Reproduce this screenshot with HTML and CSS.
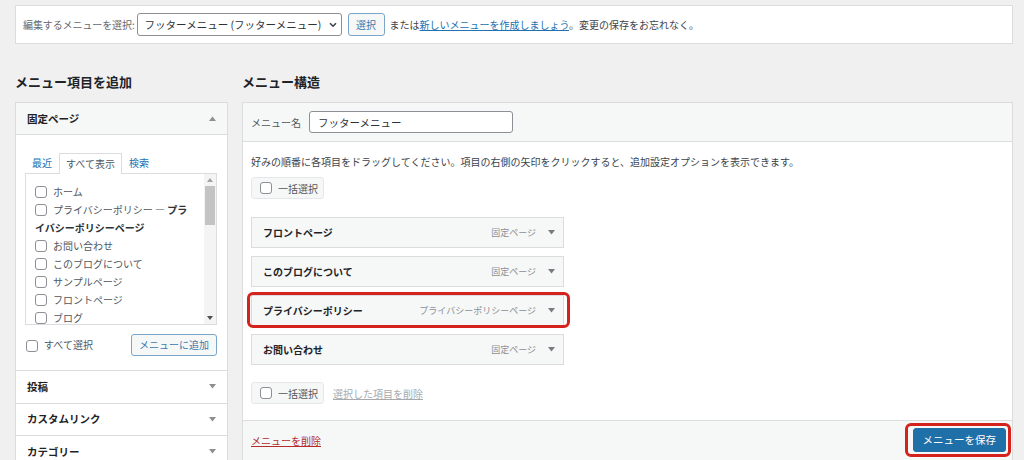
FILE: index.html
```html
<!DOCTYPE html>
<html lang="ja">
<head>
<meta charset="utf-8">
<title>メニュー</title>
<link rel="stylesheet" href="styles.css">
</head>
<body>
<div class="page">
  <div class="manage-menus">
    <span class="mm-label">編集するメニューを選択:</span>
    <span class="select"><span class="select-text">フッターメニュー (フッターメニュー)</span><svg class="chev" width="8" height="6" viewBox="0 0 8 6"><path d="M1 1.2L4 4.2L7 1.2" fill="none" stroke="#3c434a" stroke-width="1.6"/></svg></span>
    <span class="btn btn-secondary btn-select">選択</span>
    <span class="mm-text">または<a href="#" class="link">新しいメニューを作成しましょう</a>。変更の保存をお忘れなく。</span>
  </div>

  <div class="columns">
    <div class="col-left">
      <h2 class="col-title">メニュー項目を追加</h2>
      <div class="accordion">
        <div class="acc-section open">
          <div class="acc-head">固定ページ<svg width="7" height="5" viewBox="0 0 7 5"><path d="M0 5L3.5 0.5L7 5Z" fill="#8c8f94"/></svg></div>
          <div class="acc-body">
            <div class="tabs">
              <span class="tab">最近</span>
              <span class="tab active">すべて表示</span>
              <span class="tab">検索</span>
            </div>
            <div class="listbox">
              <ul class="list">
                <li><input type="checkbox" class="cb">ホーム</li>
                <li><input type="checkbox" class="cb">プライバシーポリシー — <strong>プラ<br>イバシーポリシーページ</strong></li>
                <li><input type="checkbox" class="cb">お問い合わせ</li>
                <li><input type="checkbox" class="cb">このブログについて</li>
                <li><input type="checkbox" class="cb">サンプルページ</li>
                <li><input type="checkbox" class="cb">フロントページ</li>
                <li><input type="checkbox" class="cb">ブログ</li>
              </ul>
              <div class="scrollbar">
                <span class="sb-btn"><svg width="6" height="4" viewBox="0 0 6 4"><path d="M0 4L3 0L6 4Z" fill="#a3a3a3"/></svg></span>
                <div class="sb-track"><div class="sb-thumb"></div></div>
                <span class="sb-btn"><svg width="6" height="4" viewBox="0 0 6 4"><path d="M0 0H6L3 4Z" fill="#505050"/></svg></span>
              </div>
            </div>
            <div class="acc-actions">
              <label class="check-label"><input type="checkbox" class="cb">すべて選択</label>
              <span class="btn btn-secondary btn-add">メニューに追加</span>
            </div>
          </div>
        </div>
        <div class="acc-section">
          <div class="acc-head">投稿<svg width="7" height="5" viewBox="0 0 7 5"><path d="M0 0H7L3.5 4.5Z" fill="#8c8f94"/></svg></div>
        </div>
        <div class="acc-section">
          <div class="acc-head">カスタムリンク<svg width="7" height="5" viewBox="0 0 7 5"><path d="M0 0H7L3.5 4.5Z" fill="#8c8f94"/></svg></div>
        </div>
        <div class="acc-section">
          <div class="acc-head">カテゴリー<svg width="7" height="5" viewBox="0 0 7 5"><path d="M0 0H7L3.5 4.5Z" fill="#8c8f94"/></svg></div>
        </div>
      </div>
    </div>

    <div class="col-right">
      <h2 class="col-title">メニュー構造</h2>
      <div class="menu-edit">
        <div class="me-header">
          <label class="me-label">メニュー名</label>
          <input class="name-input" type="text" value="フッターメニュー">
        </div>
        <div class="me-body">
          <p class="desc">好みの順番に各項目をドラッグしてください。項目の右側の矢印をクリックすると、追加設定オプションを表示できます。</p>
          <label class="bulk"><input type="checkbox" class="cb">一括選択</label>
          <ul class="menu-items">
            <li class="menu-item"><span class="mi-title">フロントページ</span><span class="mi-type">固定ページ</span><svg class="mi-arrow" width="7" height="5" viewBox="0 0 7 5"><path d="M0 0H7L3.5 4.5Z" fill="#787c82"/></svg></li>
            <li class="menu-item"><span class="mi-title">このブログについて</span><span class="mi-type">固定ページ</span><svg class="mi-arrow" width="7" height="5" viewBox="0 0 7 5"><path d="M0 0H7L3.5 4.5Z" fill="#787c82"/></svg></li>
            <li class="menu-item"><span class="mi-title">プライバシーポリシー</span><span class="mi-type">プライバシーポリシーページ</span><svg class="mi-arrow" width="7" height="5" viewBox="0 0 7 5"><path d="M0 0H7L3.5 4.5Z" fill="#787c82"/></svg><span class="hl hl-item"></span></li>
            <li class="menu-item"><span class="mi-title">お問い合わせ</span><span class="mi-type">固定ページ</span><svg class="mi-arrow" width="7" height="5" viewBox="0 0 7 5"><path d="M0 0H7L3.5 4.5Z" fill="#787c82"/></svg></li>
          </ul>
          <div class="bulk-row">
            <label class="bulk"><input type="checkbox" class="cb">一括選択</label>
            <a href="#" class="link-disabled">選択した項目を削除</a>
          </div>
        </div>
        <div class="me-footer">
          <a href="#" class="link-delete">メニューを削除</a>
          <span class="btn btn-primary">メニューを保存<span class="hl hl-btn"></span></span>
        </div>
      </div>
    </div>
  </div>
</div>
</body>
</html>
```

FILE: styles.css
```css
* {
  box-sizing: border-box;
}

html,
body {
  overflow: hidden;
}

body {
  margin: 0;
  background: #f0f0f1;
  font-family: "Noto Sans CJK JP", "Noto Sans", sans-serif;
  font-size: 10px;
  line-height: 1.5;
  color: #3c434a;
}

.page {
  padding: 5px 11px 0 15px;
}

/* top bar */
.manage-menus {
  height: 39px;
  background: #fff;
  border: 1px solid #dcdcde;
  display: flex;
  align-items: center;
  padding-left: 7px;
}

.mm-label {
  color: #646970;
  margin-right: 2px;
  letter-spacing: -0.1px;
}

.select {
  display: flex;
  align-items: center;
  justify-content: space-between;
  width: 205px;
  height: 23px;
  border: 1px solid #8c8f94;
  border-radius: 3px;
  padding: 0 4px 0 7px;
  font-size: 10.5px;
  color: #2c3338;
  background: #fff;
}

.btn {
  display: inline-flex;
  align-items: center;
  justify-content: center;
  border: 1px solid;
  border-radius: 3px;
  font-size: 10px;
  line-height: 1;
  white-space: nowrap;
}

.btn-secondary {
  background: #f6f7f7;
  border-color: #7aa6c9;
  color: #3a7ab0;
}

.btn-select {
  width: 37px;
  height: 23px;
  margin-left: 6px;
}

.mm-text {
  margin-left: 5px;
}

.link {
  color: #2271b1;
  text-decoration: underline;
}

/* columns */
.columns {
  display: flex;
  gap: 14px;
  align-items: flex-start;
}

.col-left {
  width: 213px;
  flex: none;
}

.col-right {
  flex: 1;
  min-width: 0;
}

.col-title {
  font-size: 13px;
  line-height: 18px;
  margin: 29px 0 11px;
  color: #1d2327;
  font-weight: 700;
}

/* accordion */
.accordion {
  border: 1px solid #dcdcde;
  background: #fff;
}

.acc-section + .acc-section {
  border-top: 1px solid #dcdcde;
}

.acc-head {
  height: 31.5px;
  display: flex;
  align-items: center;
  justify-content: space-between;
  padding: 0 11px 0 11px;
  font-size: 10.5px;
  font-weight: 700;
  color: #1d2327;
  background: #fff;
}

.open .acc-head {
  height: 32px;
  background: #f6f7f7;
  border-bottom: 1px solid #dcdcde;
}

.acc-body {
  padding: 18px 10px 14px 9px;
}

.tabs {
  display: flex;
  height: 21px;
  margin-bottom: -1px;
  position: relative;
  z-index: 1;
}

.tab {
  padding: 0 7px;
  line-height: 19px;
  color: #2271b1;
}

.tab.active {
  border: 1px solid #dcdcde;
  border-bottom: none;
  background: #fff;
  color: #50575e;
  padding: 0 6px;
}

.listbox {
  display: flex;
  height: 152px;
  border: 1px solid #dcdcde;
  background: #fff;
}

.list {
  flex: 1;
  list-style: none;
  margin: 0;
  padding: 9px 0 0 9px;
  overflow: hidden;
  color: #50575e;
}

.list li {
  line-height: 18px;
  white-space: nowrap;
}

.list strong {
  color: #2c3338;
}

.cb {
  appearance: none;
  -webkit-appearance: none;
  display: inline-block;
  width: 12px;
  height: 12px;
  border: 1px solid #8c8f94;
  border-radius: 3px;
  margin: 0 6px 0 0;
  vertical-align: middle;
  background: #fff;
  position: relative;
  top: -1px;
}

.scrollbar {
  width: 12px;
  display: flex;
  flex-direction: column;
  background: #f4f4f4;
}

.sb-btn {
  height: 12px;
  display: flex;
  align-items: center;
  justify-content: center;
}

.sb-track {
  flex: 1;
  padding: 0 1px;
}

.sb-thumb {
  height: 39px;
  background: #c3c3c3;
}

.acc-actions {
  display: flex;
  justify-content: space-between;
  align-items: center;
  margin-top: 9px;
  padding-left: 1px;
}

.check-label {
  color: #50575e;
}

.btn-add {
  width: 86px;
  height: 22px;
}

/* menu structure */
.menu-edit {
  border: 1px solid #dcdcde;
  background: #fff;
}

.me-header {
  height: 39px;
  background: #f6f7f7;
  border-bottom: 1px solid #dcdcde;
  display: flex;
  align-items: center;
  padding-left: 8px;
}

.me-label {
  color: #50575e;
}

.name-input {
  width: 204px;
  height: 22px;
  margin-left: 8px;
  border: 1px solid #8c8f94;
  border-radius: 3px;
  font-family: inherit;
  font-size: 10.5px;
  padding: 0 8px;
  color: #2c3338;
  background: #fff;
}

.me-body {
  padding: 12px 8px 16px;
}

.desc {
  margin: 0;
  line-height: 15px;
  color: #3c434a;
}

.bulk {
  display: inline-flex;
  align-items: center;
  height: 22px;
  width: 73px;
  padding-left: 8px;
  background: #f6f7f7;
  border: 1px solid #e6e7e8;
  border-radius: 3px;
  color: #50575e;
  margin-top: 8px;
}

.bulk .cb {
  top: 0;
}

.menu-items {
  list-style: none;
  margin: 18px 0 0;
  padding: 0;
}

.menu-item {
  position: relative;
  display: flex;
  align-items: center;
  width: 313px;
  height: 31px;
  border: 1px solid #dcdcde;
  background: #f6f7f7;
  padding: 0 8px 0 11px;
}

.menu-item + .menu-item {
  margin-top: 8px;
}

.mi-title {
  flex: 1;
  font-weight: 700;
  color: #1d2327;
}

.mi-type {
  color: #8c8f94;
  font-size: 9px;
  margin-right: 12px;
}

.hl {
  position: absolute;
  border: 3px solid #d3231c;
  border-radius: 6px;
  pointer-events: none;
}

.hl-item {
  top: -4px;
  left: -5px;
  right: -7px;
  bottom: -3px;
}

.bulk-row {
  display: flex;
  align-items: center;
  gap: 9px;
  margin-top: 9px;
}

.link-disabled {
  color: #a7aaad;
  text-decoration: underline;
  margin-top: 8px;
}

.me-footer {
  border-top: 1px solid #dcdcde;
  background: #f6f7f7;
  display: flex;
  justify-content: space-between;
  align-items: center;
  padding: 7px 6px 12px 8px;
}

.link-delete {
  color: #b32d2e;
  text-decoration: underline;
}

.btn-primary {
  position: relative;
  height: 24px;
  padding: 0 9px;
  font-size: 10.5px;
  background: #1f6fa8;
  border-color: #1f6fa8;
  color: #fff;
}

.hl-btn {
  top: -6px;
  left: -9px;
  right: -6px;
  bottom: -6px;
}
```
